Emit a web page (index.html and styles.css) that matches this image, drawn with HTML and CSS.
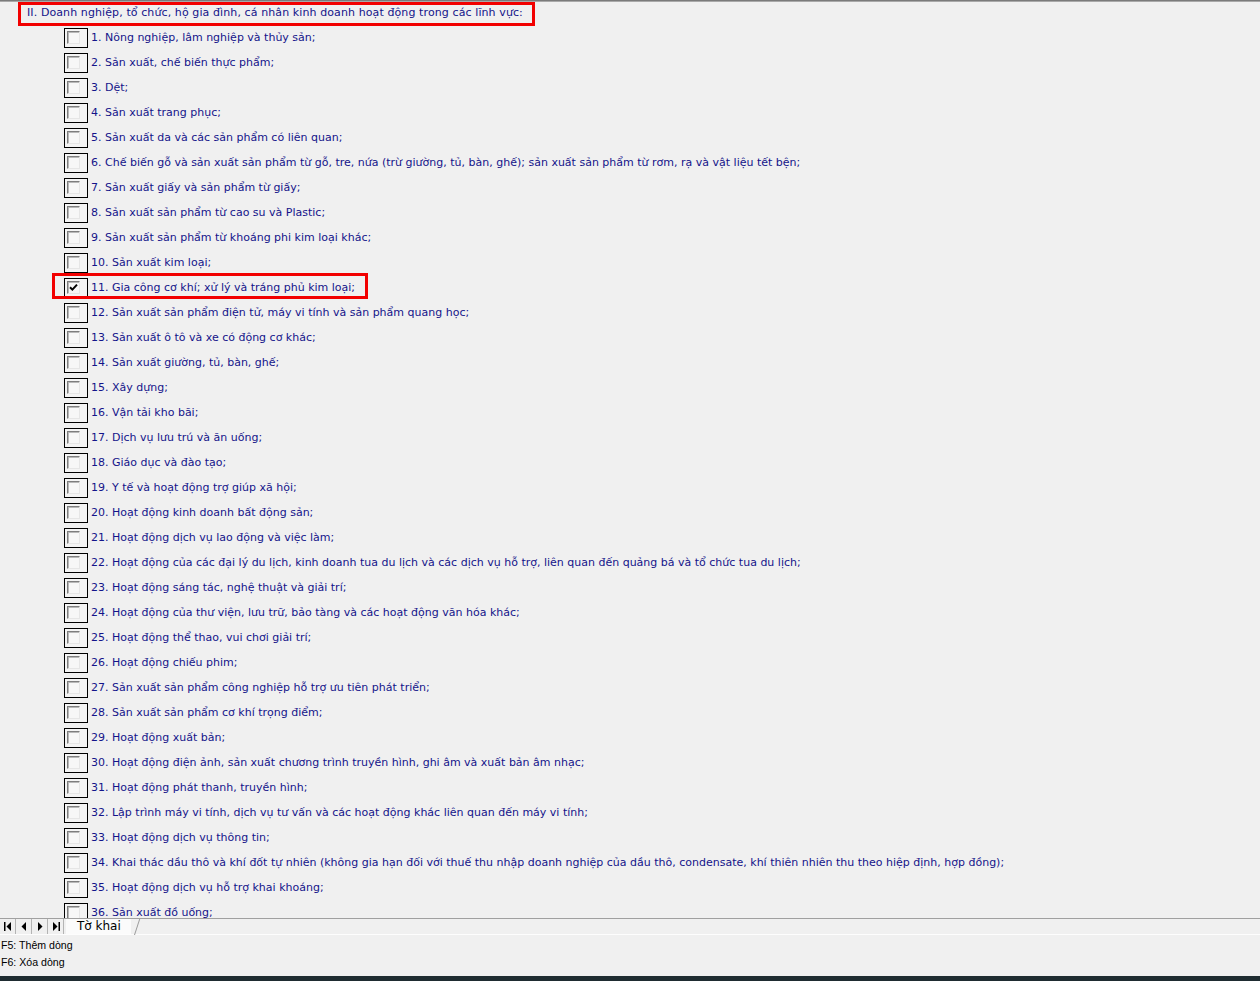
FILE: index.html
```html
<!DOCTYPE html>
<html lang="vi">
<head>
<meta charset="utf-8">
<title>Tờ khai</title>
<link rel="stylesheet" href="styles.css">
</head>
<body>
<div class="app">
  <div class="topline"></div>
  <div class="sheet">
    <div class="title-row"><span class="title">II. Doanh nghiệp, tổ chức, hộ gia đình, cá nhân kinh doanh hoạt động trong các lĩnh vực:</span></div>
    <ul class="items">
      <li class="item"><span class="cb"><span class="box"></span></span><span class="label">1. Nông nghiệp, lâm nghiệp và thủy sản;</span></li>
      <li class="item"><span class="cb"><span class="box"></span></span><span class="label">2. Sản xuất, chế biến thực phẩm;</span></li>
      <li class="item"><span class="cb"><span class="box"></span></span><span class="label">3. Dệt;</span></li>
      <li class="item"><span class="cb"><span class="box"></span></span><span class="label">4. Sản xuất trang phục;</span></li>
      <li class="item"><span class="cb"><span class="box"></span></span><span class="label">5. Sản xuất da và các sản phẩm có liên quan;</span></li>
      <li class="item"><span class="cb"><span class="box"></span></span><span class="label">6. Chế biến gỗ và sản xuất sản phẩm từ gỗ, tre, nứa (trừ giường, tủ, bàn, ghế); sản xuất sản phẩm từ rơm, rạ và vật liệu tết bện;</span></li>
      <li class="item"><span class="cb"><span class="box"></span></span><span class="label">7. Sản xuất giấy và sản phẩm từ giấy;</span></li>
      <li class="item"><span class="cb"><span class="box"></span></span><span class="label">8. Sản xuất sản phẩm từ cao su và Plastic;</span></li>
      <li class="item"><span class="cb"><span class="box"></span></span><span class="label">9. Sản xuất sản phẩm từ khoáng phi kim loại khác;</span></li>
      <li class="item"><span class="cb"><span class="box"></span></span><span class="label">10. Sản xuất kim loại;</span></li>
      <li class="item item-marked"><span class="cb"><span class="box"><svg class="tick" viewBox="0 0 9 9" width="9" height="9"><path d="M1 4.2 L3.4 6.6 L8 1.6" fill="none" stroke="#000" stroke-width="2"/></svg></span></span><span class="label">11. Gia công cơ khí; xử lý và tráng phủ kim loại;</span></li>
      <li class="item"><span class="cb"><span class="box"></span></span><span class="label">12. Sản xuất sản phẩm điện tử, máy vi tính và sản phẩm quang học;</span></li>
      <li class="item"><span class="cb"><span class="box"></span></span><span class="label">13. Sản xuất ô tô và xe có động cơ khác;</span></li>
      <li class="item"><span class="cb"><span class="box"></span></span><span class="label">14. Sản xuất giường, tủ, bàn, ghế;</span></li>
      <li class="item"><span class="cb"><span class="box"></span></span><span class="label">15. Xây dựng;</span></li>
      <li class="item"><span class="cb"><span class="box"></span></span><span class="label">16. Vận tải kho bãi;</span></li>
      <li class="item"><span class="cb"><span class="box"></span></span><span class="label">17. Dịch vụ lưu trú và ăn uống;</span></li>
      <li class="item"><span class="cb"><span class="box"></span></span><span class="label">18. Giáo dục và đào tạo;</span></li>
      <li class="item"><span class="cb"><span class="box"></span></span><span class="label">19. Y tế và hoạt động trợ giúp xã hội;</span></li>
      <li class="item"><span class="cb"><span class="box"></span></span><span class="label">20. Hoạt động kinh doanh bất động sản;</span></li>
      <li class="item"><span class="cb"><span class="box"></span></span><span class="label">21. Hoạt động dịch vụ lao động và việc làm;</span></li>
      <li class="item"><span class="cb"><span class="box"></span></span><span class="label">22. Hoạt động của các đại lý du lịch, kinh doanh tua du lịch và các dịch vụ hỗ trợ, liên quan đến quảng bá và tổ chức tua du lịch;</span></li>
      <li class="item"><span class="cb"><span class="box"></span></span><span class="label">23. Hoạt động sáng tác, nghệ thuật và giải trí;</span></li>
      <li class="item"><span class="cb"><span class="box"></span></span><span class="label">24. Hoạt động của thư viện, lưu trữ, bảo tàng và các hoạt động văn hóa khác;</span></li>
      <li class="item"><span class="cb"><span class="box"></span></span><span class="label">25. Hoạt động thể thao, vui chơi giải trí;</span></li>
      <li class="item"><span class="cb"><span class="box"></span></span><span class="label">26. Hoạt động chiếu phim;</span></li>
      <li class="item"><span class="cb"><span class="box"></span></span><span class="label">27. Sản xuất sản phẩm công nghiệp hỗ trợ ưu tiên phát triển;</span></li>
      <li class="item"><span class="cb"><span class="box"></span></span><span class="label">28. Sản xuất sản phẩm cơ khí trọng điểm;</span></li>
      <li class="item"><span class="cb"><span class="box"></span></span><span class="label">29. Hoạt động xuất bản;</span></li>
      <li class="item"><span class="cb"><span class="box"></span></span><span class="label">30. Hoạt động điện ảnh, sản xuất chương trình truyền hình, ghi âm và xuất bản âm nhạc;</span></li>
      <li class="item"><span class="cb"><span class="box"></span></span><span class="label">31. Hoạt động phát thanh, truyền hình;</span></li>
      <li class="item"><span class="cb"><span class="box"></span></span><span class="label">32. Lập trình máy vi tính, dịch vụ tư vấn và các hoạt động khác liên quan đến máy vi tính;</span></li>
      <li class="item"><span class="cb"><span class="box"></span></span><span class="label">33. Hoạt động dịch vụ thông tin;</span></li>
      <li class="item"><span class="cb"><span class="box"></span></span><span class="label">34. Khai thác dầu thô và khí đốt tự nhiên (không gia hạn đối với thuế thu nhập doanh nghiệp của dầu thô, condensate, khí thiên nhiên thu theo hiệp định, hợp đồng);</span></li>
      <li class="item"><span class="cb"><span class="box"></span></span><span class="label">35. Hoạt động dịch vụ hỗ trợ khai khoáng;</span></li>
      <li class="item"><span class="cb"><span class="box"></span></span><span class="label">36. Sản xuất đồ uống;</span></li>
    </ul>
  </div>
  <div class="tabbar">
    <div class="nav">
      <span class="navbtn"><svg viewBox="0 0 8 9" width="8" height="9"><rect x="0" y="0" width="1.5" height="9" fill="#000"/><path d="M7 0 L2.5 4.5 L7 9 Z" fill="#000"/></svg></span>
      <span class="navbtn"><svg viewBox="0 0 8 9" width="8" height="9"><path d="M6 0 L1.5 4.5 L6 9 Z" fill="#000"/></svg></span>
      <span class="navbtn"><svg viewBox="0 0 8 9" width="8" height="9"><path d="M2 0 L6.5 4.5 L2 9 Z" fill="#000"/></svg></span>
      <span class="navbtn"><svg viewBox="0 0 8 9" width="8" height="9"><path d="M1 0 L5.5 4.5 L1 9 Z" fill="#000"/><rect x="6.5" y="0" width="1.5" height="9" fill="#000"/></svg></span>
    </div>
    <div class="tab">Tờ khai</div>
  </div>
  <div class="status">
    <div class="hint">F5: Thêm dòng</div>
    <div class="hint">F6: Xóa dòng</div>
  </div>
  <div class="bottombar"></div>
</div>
</body>
</html>
```
FILE: styles.css
```css
html, body {
  margin: 0;
  padding: 0;
  height: 100%;
}
body {
  background: #f0f0f0;
  font-family: "DejaVu Sans", "Liberation Sans", Arial, sans-serif;
  overflow: hidden;
}
.app {
  display: flex;
  flex-direction: column;
  height: 981px;
}
.topline {
  height: 2px;
  flex: 0 0 auto;
  background: #7b7b7b;
  border-bottom: 1px solid #a9a9a9;
  box-sizing: border-box;
}
.sheet {
  flex: 1 1 auto;
  overflow: hidden;
  color: #14148a;
  font-size: 11px;
}
.title-row {
  height: 26px;
  padding-left: 18px;
}
.title {
  display: inline-block;
  border: 3px solid #f20000;
  padding: 0 9px 0 6px;
  line-height: 16px;
  height: 18px;
  letter-spacing: 0.1px;
}
.items {
  list-style: none;
  margin: 0;
  padding: 0 0 0 64px;
}
.item {
  display: flex;
  align-items: center;
  height: 20px;
  margin-bottom: 5px;
  position: relative;
  white-space: nowrap;
}
.item-marked::after {
  content: "";
  position: absolute;
  left: -12px;
  top: -5px;
  width: 310px;
  height: 20px;
  border: 3px solid #f20000;
}
.cb {
  flex: 0 0 auto;
  width: 24px;
  height: 20px;
  box-sizing: border-box;
  border: 1px solid #000;
  background: #f4f4f4;
  padding: 2px 0 0 2px;
}
.box {
  display: flex;
  align-items: center;
  justify-content: center;
  width: 13px;
  height: 13px;
  box-sizing: border-box;
  border: 1px solid;
  border-color: #7e7e7e #e6e6e6 #e6e6e6 #7e7e7e;
  background: #f7f7f7;
  box-shadow: inset 1px 1px 0 #b8b8b8;
}
.tick {
  display: block;
}
.label {
  padding-left: 3px;
  line-height: 18px;
  margin-bottom: 1px;
}
.tabbar {
  flex: 0 0 auto;
  height: 17px;
  box-sizing: border-box;
  border-top: 1px solid #a0a0a0;
  border-bottom: 1px solid #fdfdfd;
  display: flex;
  align-items: stretch;
}
.nav {
  display: flex;
  align-items: center;
}
.navbtn {
  display: flex;
  align-items: center;
  justify-content: center;
  width: 16px;
  height: 15px;
  box-sizing: border-box;
  border-right: 1px solid #b4b4b4;
}
.tab {
  position: relative;
  margin-left: 2px;
  padding: 0 10px 0 11px;
  background: #fbfbfb;
  color: #000;
  line-height: 15px;
  font-family: "DejaVu Sans", sans-serif;
  font-size: 12px;
}
.tab::after {
  content: "";
  position: absolute;
  right: -4px;
  top: 0;
  width: 1px;
  height: 16px;
  background: #9a9a9a;
  transform: skewX(-18deg);
  transform-origin: bottom;
}
.status {
  flex: 0 0 auto;
  height: 41px;
  padding-top: 2px;
  box-sizing: border-box;
  font-size: 10.6px;
  color: #000;
  font-family: "Liberation Sans", Arial, sans-serif;
}
.hint {
  line-height: 17px;
  padding-left: 1px;
}
.bottombar {
  flex: 0 0 auto;
  height: 5px;
  background: #1f2c31;
}
```
